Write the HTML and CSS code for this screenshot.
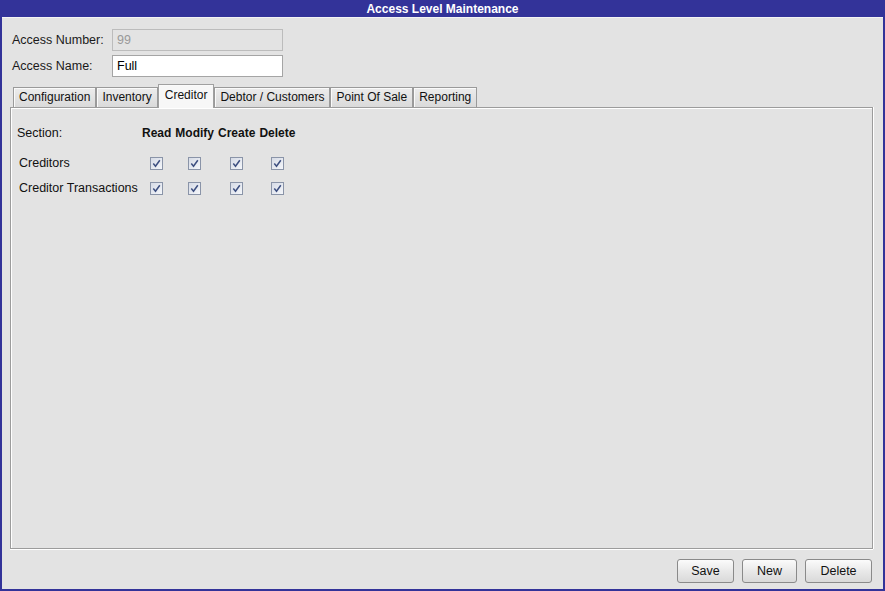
FILE: index.html
```html
<!DOCTYPE html>
<html>
<head>
<meta charset="utf-8">
<title>Access Level Maintenance</title>
<link rel="stylesheet" href="styles.css">
</head>
<body>
<div class="window">
  <div class="titlebar">Access Level Maintenance</div>
  <div class="content">
    <div class="form">
      <div class="field">
        <label class="lbl">Access Number:</label>
        <div class="input disabled">99</div>
      </div>
      <div class="field">
        <label class="lbl">Access Name:</label>
        <div class="input">Full</div>
      </div>
    </div>
    <div class="tabs">
      <div class="tab">Configuration</div>
      <div class="tab">Inventory</div>
      <div class="tab active">Creditor</div>
      <div class="tab">Debtor / Customers</div>
      <div class="tab">Point Of Sale</div>
      <div class="tab">Reporting</div>
    </div>
    <div class="panel">
      <div class="grid">
        <div class="head-label">Section:</div>
        <div class="head">Read</div>
        <div class="head">Modify</div>
        <div class="head">Create</div>
        <div class="head">Delete</div>

        <div class="row-label">Creditors</div>
        <div class="cell"><span class="cb"><svg viewBox="0 0 9 9" width="9" height="9"><path d="M1.3 4.6 L3.5 7.2 L7.8 1.2" fill="none" stroke="#3d4f80" stroke-width="1.5"/></svg></span></div>
        <div class="cell"><span class="cb"><svg viewBox="0 0 9 9" width="9" height="9"><path d="M1.3 4.6 L3.5 7.2 L7.8 1.2" fill="none" stroke="#3d4f80" stroke-width="1.5"/></svg></span></div>
        <div class="cell"><span class="cb"><svg viewBox="0 0 9 9" width="9" height="9"><path d="M1.3 4.6 L3.5 7.2 L7.8 1.2" fill="none" stroke="#3d4f80" stroke-width="1.5"/></svg></span></div>
        <div class="cell"><span class="cb"><svg viewBox="0 0 9 9" width="9" height="9"><path d="M1.3 4.6 L3.5 7.2 L7.8 1.2" fill="none" stroke="#3d4f80" stroke-width="1.5"/></svg></span></div>

        <div class="row-label">Creditor Transactions</div>
        <div class="cell"><span class="cb"><svg viewBox="0 0 9 9" width="9" height="9"><path d="M1.3 4.6 L3.5 7.2 L7.8 1.2" fill="none" stroke="#3d4f80" stroke-width="1.5"/></svg></span></div>
        <div class="cell"><span class="cb"><svg viewBox="0 0 9 9" width="9" height="9"><path d="M1.3 4.6 L3.5 7.2 L7.8 1.2" fill="none" stroke="#3d4f80" stroke-width="1.5"/></svg></span></div>
        <div class="cell"><span class="cb"><svg viewBox="0 0 9 9" width="9" height="9"><path d="M1.3 4.6 L3.5 7.2 L7.8 1.2" fill="none" stroke="#3d4f80" stroke-width="1.5"/></svg></span></div>
        <div class="cell"><span class="cb"><svg viewBox="0 0 9 9" width="9" height="9"><path d="M1.3 4.6 L3.5 7.2 L7.8 1.2" fill="none" stroke="#3d4f80" stroke-width="1.5"/></svg></span></div>
      </div>
    </div>
    <div class="buttons">
      <button class="btn save">Save</button>
      <button class="btn new">New</button>
      <button class="btn del">Delete</button>
    </div>
  </div>
</div>
</body>
</html>
```
FILE: styles.css
```css
* { box-sizing: border-box; }
html, body {
  margin: 0;
  padding: 0;
  width: 885px;
  height: 591px;
  overflow: hidden;
  font-family: "Liberation Sans", Arial, sans-serif;
  font-size: 12.5px;
  color: #111;
}
.window {
  width: 885px;
  height: 591px;
  display: flex;
  flex-direction: column;
  background: #e3e3e3;
  border: 2px solid #333399;
  border-top: 0;
}
.titlebar {
  height: 17px;
  background: #333399;
  color: #fff;
  font-weight: bold;
  font-size: 12px;
  line-height: 19px;
  text-align: center;
  flex: none;
}
.content {
  flex: 1;
  display: flex;
  flex-direction: column;
  padding: 11px 10px 6px 8px;
  border-top: 1px solid #f4f4f4;
}
.form {
  display: flex;
  flex-direction: column;
  gap: 4px;
  padding-left: 2px;
}
.field {
  display: flex;
  align-items: center;
}
.lbl {
  width: 100px;
  color: #1a1a1a;
}
.input {
  width: 171px;
  height: 22px;
  border: 1px solid #a5a5a5;
  background: #fff;
  padding: 0 4px;
  line-height: 20px;
  color: #000;
}
.input.disabled {
  background: #e3e3e3;
  color: #999;
  border-color: #bcbcbc;
}
.tabs {
  display: flex;
  align-items: flex-end;
  margin-top: 7px;
  padding-left: 3px;
  height: 23px;
  position: relative;
  z-index: 1;
}
.tab {
  height: 20px;
  padding: 0 5px;
  font-size: 12px;
  line-height: 19px;
  border: 1px solid #9a9a9a;
  border-bottom: 0;
  box-shadow: inset 1px 1px 0 #fafafa;
  background: linear-gradient(#ececec, #dadada);
  color: #111;
  white-space: nowrap;
}
.tab.active {
  height: 24px;
  background: #f7f7f7;
  line-height: 21px;
  padding: 0 6px;
  margin-bottom: -1px;
  border-color: #a0a0a0;
}
.panel {
  flex: 1;
  border: 1px solid #9c9c9c;
  box-shadow: inset 1px 1px 0 #fff, 0 1px 0 #fff, 1px 0 0 #fff;
  margin-bottom: 10px;
  padding: 15px 0 0 6px;
}
.grid {
  display: grid;
  grid-template-columns: 121px auto auto auto auto;
  grid-template-rows: 25px 20px 20px;
  column-gap: 4px;
  row-gap: 5px;
  justify-content: start;
  align-items: center;
}
.head-label, .head {
  align-self: start;
  line-height: 20px;
}
.head {
  font-weight: bold;
  font-size: 12px;
  text-align: center;
}
.row-label { padding-left: 2px; }
.cell {
  display: flex;
  justify-content: center;
}
.cb {
  width: 13px;
  height: 13px;
  border: 1px solid #8a94a8;
  background: linear-gradient(135deg, #d6dbe6, #f4f6fa);
  display: flex;
  align-items: center;
  justify-content: center;
}
.cb svg { display: block; }
.buttons {
  display: flex;
  justify-content: flex-end;
  gap: 8px;
  padding-right: 1px;
}
.btn {
  height: 24px;
  font-family: "Liberation Sans", Arial, sans-serif;
  font-size: 12.5px;
  color: #111;
  border: 1px solid #8a8a8a;
  border-radius: 3px;
  background: linear-gradient(#fbfbfb, #e9e9e9 50%, #d9d9d9);
  padding: 0;
}
.save { width: 57px; }
.new { width: 55px; }
.del { width: 67px; }
```
